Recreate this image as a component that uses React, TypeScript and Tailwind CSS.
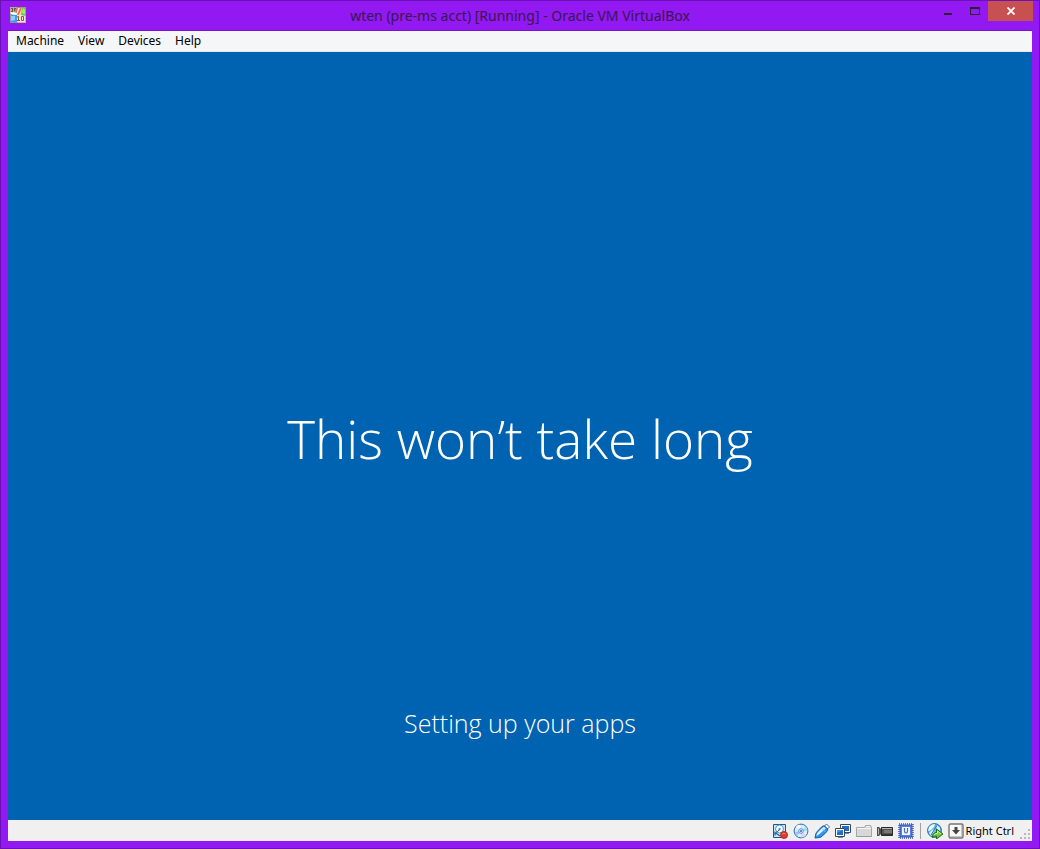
import type { ReactNode } from "react";

function AppIcon() {
  return (
    <svg width="16" height="16" viewBox="0 0 16 16" aria-hidden="true">
      <rect width="16" height="16" fill="#f3e3d2" />
      <path d="M0 0h7v6H0z" fill="#d3c8ba" />
      <path d="M1 1.500h2v1H2v1h1v1H1M4 1.500h2M4.500 1.500v3M6 1.500v3" stroke="#6b5a4e" fill="none" />
      <path d="M7 0h5L9 8H5z" fill="#e9683c" />
      <path d="M8 1h2L7 8H6z" fill="#fbe8dc" />
      <path d="M12 0h4v9l-5-1z" fill="#6cc73a" />
      <path d="M13 1l2 2v4l-3-1z" fill="#a5e874" />
      <path d="M0 7l7 1v8H0z" fill="#3a9fe4" />
      <path d="M1 9h4v4l-4 1z" fill="#8bd0fa" />
      <path d="M0 5l7 1-1 2-6-1z" fill="#fff" />
      <path d="M7 10l1.500-.5V14M7 13.500h3M11.500 9.500h2v4h-2z" stroke="#9c4a34" fill="none" />
      <path d="M.5.5h15v15H.5z" stroke="#a79a7c" fill="none" opacity=".6" />
    </svg>
  );
}

function DiskIcon() {
  return (
    <svg width="16" height="16" viewBox="0 0 16 16" aria-hidden="true">
      <path d="M1.500 1.500h12v13h-12z" fill="#cfe6f8" stroke="#1c568f" />
      <circle cx="7.500" cy="6" r="4" fill="#fff" stroke="#4b94cc" />
      <circle cx="7.500" cy="6" r="1.200" fill="#5c9fd0" />
      <path d="M3 12.500V9.500l5 3.500" fill="none" stroke="#2a6aa4" strokeWidth="1.400" />
      <path d="M4 9.500l4-3" stroke="#2a6aa4" />
      <circle cx="12" cy="12" r="3.600" fill="#dc3a2c" stroke="#a81c14" strokeWidth=".7" />
      <path d="M10.300 11q1.500-1.500 3.400 0" stroke="#f78f80" fill="none" />
    </svg>
  );
}

function DiscIcon() {
  return (
    <svg width="16" height="16" viewBox="0 0 16 16" aria-hidden="true">
      <circle cx="8" cy="8" r="6.900" fill="#dceafa" stroke="#2869b4" />
      <path d="M8 8L3 3.500A6.400 6.400 0 0 1 7 1.700z" fill="#fff" />
      <path d="M8 8l5-4.500A6.400 6.400 0 0 1 14.300 8z" fill="#9fe0e6" />
      <path d="M8 8l5 4.500A6.400 6.400 0 0 1 8 14.400z" fill="#e5cdf3" />
      <path d="M8 8L1.700 9A6.400 6.400 0 0 0 4 13z" fill="#9fc6f1" />
      <circle cx="8" cy="8" r="2.300" fill="#f4f7fb" stroke="#4f91d2" />
      <circle cx="8" cy="8" r="1" fill="#2869b4" />
    </svg>
  );
}

function UsbIcon() {
  return (
    <svg width="16" height="16" viewBox="0 0 16 16" aria-hidden="true">
      <path d="M10 3.500L12.500 1l3 3L13 6.500z" fill="#fff" stroke="#466f9d" />
      <path
        d="M1 15l.8-4q.4-1.500 1.500-2.600L7.500 4q1.800-1.600 3.200-1l3 3q.3 1.300-1.200 2.900l-4 4Q7 14.400 5 14.600z"
        fill="#2d94ec"
        stroke="#1c5aa6"
      />
      <path d="M2.500 12q.3-1.700 1.700-3.100l4-4q1-.8 2-.8l1.500 1.500-6.200 5.400-3 2z" fill="#dff2ff" />
      <path d="M8 5.500L11.500 9" stroke="#78baf0" />
    </svg>
  );
}

function NetworkIcon() {
  return (
    <svg width="16" height="16" viewBox="0 0 16 16" aria-hidden="true">
      <path d="M5.500 1.500h10v8h-10z" fill="#fff" stroke="#34495d" />
      <path d="M7 3h7v5H7z" fill="#1f6bd0" />
      <path d="M10 10.500h4" stroke="#7b8a98" />
      <path d="M.5 5.500h9v8h-9z" fill="#fff" stroke="#34495d" />
      <path d="M2 7h6v5H2z" fill="#1f6bd0" />
      <path d="M2 7h6L2 10z" fill="#4e94e5" />
      <path d="M3 14.500h5" stroke="#7b8a98" />
    </svg>
  );
}

function FolderIcon() {
  return (
    <svg width="16" height="16" viewBox="0 0 16 16" aria-hidden="true">
      <path d="M.5 13.500v-9h8l1-2h5l1 2v9z" fill="#d0d0d0" stroke="#a6a6a6" />
      <path d="M1 6h14v7H1z" fill="#d8d8d8" />
      <path d="M1 5.500h14M10 3.500h4" stroke="#f7f7f7" />
      <path d="M.5 13.500h15" stroke="#999" />
    </svg>
  );
}

function CameraIcon() {
  return (
    <svg width="16" height="16" viewBox="0 0 16 16" aria-hidden="true">
      <path d="M0 4l2 0 2 2v5l-2 2H0z" fill="#4f4f4f" />
      <path d="M1.500 5.500v6" stroke="#b3b3b3" />
      <path d="M4.500 4.500h11v8h-11z" fill="#555" stroke="#292929" />
      <path d="M5 5.500h10" stroke="#b7b7b7" />
      <path d="M7 7h8v3H7z" fill="#777" />
      <path d="M5 11.500h10" stroke="#353535" />
    </svg>
  );
}

function ChipIcon() {
  return (
    <svg width="16" height="16" viewBox="0 0 16 16" aria-hidden="true">
      <rect x="1" y="1" width="14" height="14" fill="none" stroke="#3657b8" strokeWidth="1.500" strokeDasharray="1 1" />
      <rect x="2" y="2" width="12" height="12" fill="#5a80e6" stroke="#2448a8" strokeWidth=".8" />
      <path d="M4 4h8v8H4z" fill="#f0f5ff" />
      <path d="M6.500 5v3q0 2 1.500 2t1.500-2V5" fill="none" stroke="#4b69b4" strokeWidth="1.200" />
    </svg>
  );
}

function MouseIntegrationIcon() {
  return (
    <svg width="17" height="16" viewBox="0 0 17 16" aria-hidden="true">
      <circle cx="7.500" cy="7.500" r="6.900" fill="#62b4ea" stroke="#27639b" />
      <path d="M2 4l3-2.500L8 1 7 4 4 7 1 8z" fill="#e9f7ff" />
      <path d="M2 10l3-3 3-1-1 3-3 4z" fill="#d5effc" />
      <path d="M10 2l3 3v3l-3-2-1-2z" fill="#d5effc" />
      <path d="M4 12L8 5.500l2-3" stroke="#276fae" fill="none" />
      <path d="M5.500 14.500q-.5-4.500 4-5V6l6.500 5-6.500 5v-3q-2.500 0-4 1.500z" fill="#6fc83b" stroke="#246d20" />
      <path d="M7 12q1-1.500 3.500-1.500V8l3.500 3" fill="none" stroke="#d1f7a1" />
    </svg>
  );
}

function KeyboardCaptureIcon() {
  return (
    <svg width="16" height="16" viewBox="0 0 16 16" aria-hidden="true">
      <rect x="1" y="1" width="14" height="14" rx="1.500" fill="#f8f8f8" stroke="#747474" strokeWidth="1.400" />
      <path d="M2 13.500h12M13.500 2v12" stroke="#c5c5c5" />
      <path d="M6.500 4h3v3H12l-4 4.500L4 7h2.500z" fill="#454545" />
    </svg>
  );
}

function StatusButton({ label, children }: { label: string; children: ReactNode }) {
  return (
    <button type="button" aria-label={label} className="flex h-4 items-center">
      {children}
    </button>
  );
}

const menus = ["Machine", "View", "Devices", "Help"];

export default function App() {
  return (
    <div className="flex min-h-screen flex-col border border-[#6c12b4] bg-[#9219f1] px-[7px] pb-[7px] font-['Noto_Sans','Open_Sans',sans-serif] text-black">
      <header className="grid h-[29px] grid-cols-[1fr_auto_1fr] items-start">
        <div className="pt-1.5 pl-0.5">
          <AppIcon />
        </div>
        <h1 className="pt-1 text-sm leading-[22px] text-[#37184f]">
          wten (pre-ms acct) [Running] - Oracle VM VirtualBox
        </h1>
        <div className="-mr-px flex justify-end">
          <button type="button" aria-label="Minimize" className="flex h-5 w-7 items-center justify-center">
            <svg width="8" height="8" viewBox="0 0 8 8" aria-hidden="true">
              <path d="M0 6h8v2H0z" fill="#2b2230" />
            </svg>
          </button>
          <button type="button" aria-label="Maximize" className="flex h-5 w-[26px] items-center justify-center">
            <svg width="10" height="8" viewBox="0 0 10 8" aria-hidden="true">
              <path fillRule="evenodd" d="M0 0h10v8H0zM1 2v5h8V2z" fill="#2b2230" />
            </svg>
          </button>
          <button type="button" aria-label="Close" className="flex h-5 w-[45px] items-center justify-center bg-[#c75050]">
            <svg width="8" height="8" viewBox="0 0 8 8" aria-hidden="true">
              <path d="M.5.5l7 7M7.500.5l-7 7" stroke="#fff" strokeWidth="1.800" />
            </svg>
          </button>
        </div>
      </header>

      <div className="flex grow flex-col border-t border-[#7714c5]">
        <nav className="flex h-[21px] gap-3.5 border-b border-[#e3e6ea] bg-[#f5f6f7] px-2 text-xs leading-5">
          {menus.map((name) => (
            <button key={name} type="button">
              {name}
            </button>
          ))}
        </nav>

        <main className="flex grow flex-col items-center justify-end bg-[#0063b1] pb-[77px] font-['Open_Sans',sans-serif] font-light text-white">
          <h2 className="text-[53px] leading-[72px]">This won’t take long</h2>
          <p className="mt-[228px] text-[25px] leading-10">Setting up your apps</p>
        </main>

        <footer className="flex h-[21px] items-center justify-end bg-[#f0f0f0]">
          <div className="flex items-center gap-[5px]">
            <StatusButton label="Hard disks"><DiskIcon /></StatusButton>
            <StatusButton label="Optical drives"><DiscIcon /></StatusButton>
            <StatusButton label="USB devices"><UsbIcon /></StatusButton>
            <StatusButton label="Network adapters"><NetworkIcon /></StatusButton>
            <StatusButton label="Shared folders"><FolderIcon /></StatusButton>
            <StatusButton label="Video capture"><CameraIcon /></StatusButton>
            <StatusButton label="Virtualization features"><ChipIcon /></StatusButton>
          </div>
          <div className="mr-1.5 ml-1.5 h-4 w-px bg-[#a0a0a0]" />
          <div className="flex items-center gap-1">
            <StatusButton label="Mouse integration"><MouseIntegrationIcon /></StatusButton>
            <StatusButton label="Keyboard capture"><KeyboardCaptureIcon /></StatusButton>
          </div>
          <span className="ml-0.5 text-[11px] leading-5">Right Ctrl</span>
          <div className="ml-1.5 flex h-full items-end pr-0.5 pb-0.5">
            <svg width="10" height="10" viewBox="0 0 10 10" aria-hidden="true">
              <path
                d="M8 0h2v2H8zM4 4h2v2H4zM8 4h2v2H8zM0 8h2v2H0zM4 8h2v2H4zM8 8h2v2H8z"
                fill="#b8b8b8"
              />
            </svg>
          </div>
        </footer>
      </div>
    </div>
  );
}
